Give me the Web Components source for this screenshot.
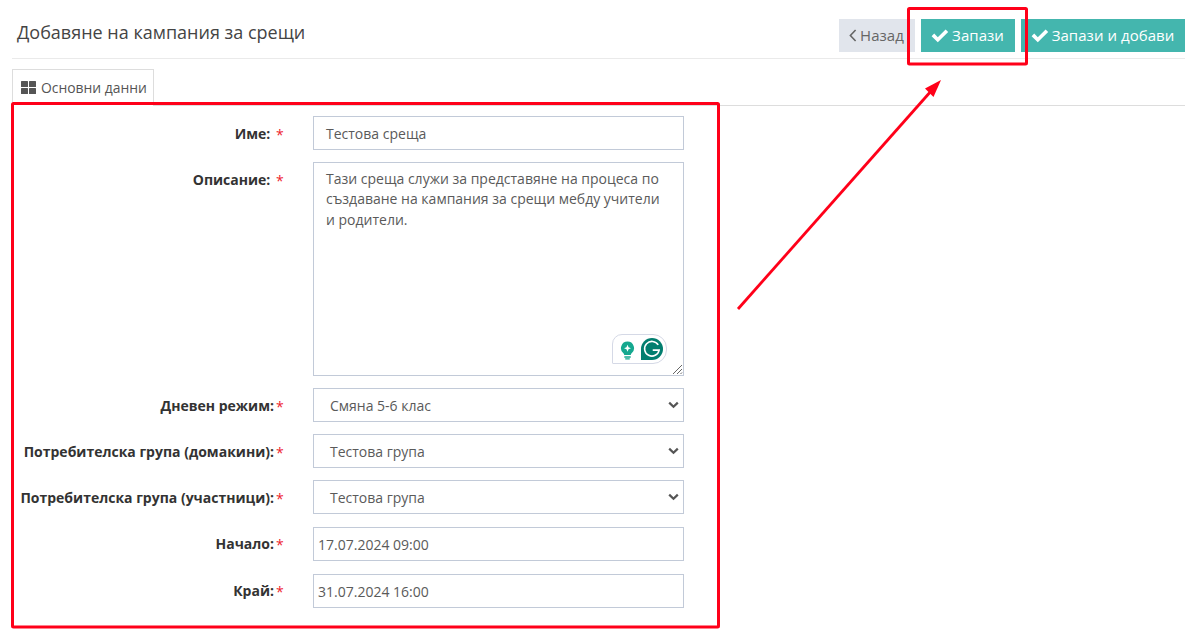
<!DOCTYPE html>
<html lang="bg">
<head>
<meta charset="utf-8">
<title>Добавяне на кампания за срещи</title>
<style>
html, body { margin: 0; padding: 0; background: #fff; }
body { font: 14px "Open Sans", "Noto Sans", sans-serif; color: #555; }
</style>
</head>
<body>
<app-page>
  <page-header slot="header" heading="Добавяне на кампания за срещи">
    <app-button kind="back" icon="back" width="76">Назад</app-button>
    <app-button kind="save" icon="check" width="94">Запази</app-button>
    <app-button kind="save" icon="check" width="164">Запази и добави</app-button>
  </page-header>
  <tab-bar slot="tabs" label="Основни данни"></tab-bar>
  <form-row label="Име: " style="--row-top: 10px">
    <form-field>Тестова среща</form-field>
  </form-row>
  <form-row label="Описание: ">
    <form-field type="area">Тази среща служи за представяне на процеса по създаване на кампания за срещи мебду учители и родители.</form-field>
  </form-row>
  <form-row label="Дневен режим:">
    <form-field type="select">Смяна 5-6 клас</form-field>
  </form-row>
  <form-row label="Потребителска група (домакини):">
    <form-field type="select">Тестова група</form-field>
  </form-row>
  <form-row label="Потребителска група (участници):">
    <form-field type="select">Тестова група</form-field>
  </form-row>
  <form-row label="Начало:" style="--row-top: 13px; --label-top: 7px">
    <form-field type="date">17.07.2024 09:00</form-field>
  </form-row>
  <form-row label="Край:" style="--row-top: 13px; --label-top: 7px">
    <form-field type="date">31.07.2024 16:00</form-field>
  </form-row>
  <red-markup slot="overlay"></red-markup>
</app-page>

<script>
const ICONS = {
  check: `<svg width="18" height="15" viewBox="0 0 18 15"><path d="M.6 8.2 3.2 5.6 6.8 9.2 14.6 1.4 17.2 4 6.8 14.2Z" fill="currentColor"/></svg>`,
  back: `<svg width="8" height="13" viewBox="0 0 8 13"><path d="M6.6 1 1.4 6.5 6.6 12" fill="none" stroke="currentColor" stroke-width="1.6"/></svg>`
};

class AppPage extends HTMLElement {
  constructor () {
    super();
    this.attachShadow({ mode: 'open' }).innerHTML = `
<style>
:host { display: block; position: relative; width: 1199px; height: 641px; overflow: hidden; background: #fff; }
.wrap { width: 1173px; margin-left: 12px; }
</style>
<div class="wrap">
  <slot name="header"></slot>
  <slot name="tabs"></slot>
  <slot></slot>
</div>
<slot name="overlay"></slot>`;
  }
}
customElements.define('app-page', AppPage);

class PageHeader extends HTMLElement {
  constructor () {
    super();
    this.attachShadow({ mode: 'open' }).innerHTML = `
<style>
:host { display: flex; justify-content: space-between; height: 58px; border-bottom: 1px solid #eaeaea; }
h1 { margin: 20px 0 0 5px; font-size: 18px; line-height: 24px; font-weight: 400; color: #444; }
.actions { display: flex; gap: 6px; padding-top: 19px; }
</style>
<h1></h1>
<div class="actions"><slot></slot></div>`;
    this.shadowRoot.querySelector('h1').textContent = this.getAttribute('heading');
  }
}
customElements.define('page-header', PageHeader);

class AppButton extends HTMLElement {
  constructor () {
    super();
    const back = this.getAttribute('kind') === 'back';
    this.attachShadow({ mode: 'open' }).innerHTML = `
<style>
:host { display: flex; align-items: center; justify-content: center; gap: 3px; box-sizing: border-box;
  width: ${this.getAttribute('width')}px; height: 33px; padding: 0 1px 2px 0; font-size: 15px; letter-spacing: .05px;
  background: ${back ? '#e1e5ec' : '#44b6ae'}; color: ${back ? '#666' : '#fff'}; }
svg { display: block; margin-top: 1px; }
</style>
${ICONS[this.getAttribute('icon')]}<span><slot></slot></span>`;
  }
}
customElements.define('app-button', AppButton);

class TabBar extends HTMLElement {
  constructor () {
    super();
    this.attachShadow({ mode: 'open' }).innerHTML = `
<style>
:host { display: block; height: 36px; margin-top: 10px; border-bottom: 1px solid #ddd; }
.tab { display: inline-flex; align-items: center; gap: 5px; box-sizing: border-box; height: 37px; width: 142px; padding-left: 8px;
  padding-bottom: 1px; border: 1px solid #ddd; border-bottom: 0; background: #fff; color: #555; font-size: 13.9px; }
svg { display: block; }
</style>
<div class="tab">
  <svg width="15" height="13" viewBox="0 0 15 13" fill="#555"><rect width="7" height="6" rx=".5"/><rect x="8" width="7" height="6" rx=".5"/><rect y="7" width="7" height="6" rx=".5"/><rect x="8" y="7" width="7" height="6" rx=".5"/></svg>
  <span></span>
</div>`;
    this.shadowRoot.querySelector('span').textContent = this.getAttribute('label');
  }
}
customElements.define('tab-bar', TabBar);

class FormRow extends HTMLElement {
  constructor () {
    super();
    this.attachShadow({ mode: 'open' }).innerHTML = `
<style>
:host { display: grid; grid-template-columns: 273px 1fr; margin-top: var(--row-top, 12px); }
.label { display: flex; justify-content: flex-end; align-items: flex-start; padding-top: var(--label-top, 8px); font-size: 14px; line-height: 20px; font-weight: 700; color: #333; white-space: pre; }
.req { color: #ee1c2e; width: 9px; margin: 1px 0 0 2px; font-size: 14px; font-weight: 400; }
.field { padding-left: 28px; }
</style>
<div class="label"><span class="text"></span></div>
<div class="field"><slot></slot></div>`;
    const text = this.shadowRoot.querySelector('.text');
    text.textContent = this.getAttribute('label');
    const req = document.createElement('span');
    req.className = 'req';
    req.textContent = '*';
    text.after(req);
  }
}
customElements.define('form-row', FormRow);

class FormField extends HTMLElement {
  constructor () {
    super();
    const type = this.getAttribute('type') || 'text';
    const pad = { text: 12, area: 12, select: 16, date: 4 }[type];
    this.attachShadow({ mode: 'open' }).innerHTML = `
<style>
:host { display: block; position: relative; box-sizing: border-box; width: 371px; height: ${type === 'area' ? 214 : 34}px;
  padding: ${type === 'area' ? '6px 18px 0 ' + pad + 'px' : '0 0 0 ' + pad + 'px'};
  border: 1px solid #c2cad8; background: #fff; color: #5a5a5a; font-size: 14px; line-height: ${type === 'area' ? '20.4px' : '33px'}; }
.chev { position: absolute; right: 4px; top: 12px; }
.grip { position: absolute; right: 0; bottom: 0; }
.grammarly { position: absolute; right: 16px; bottom: 11px; display: flex; align-items: center; gap: 6px; box-sizing: border-box;
  width: 55px; height: 30px; padding: 0 0 0 7px; border: 1px solid #d5d9e6; border-radius: 10px 14px 14px 1px; background: #fff; }
.bulb { margin-top: 2px; }
svg { display: block; }
</style>
<slot></slot>
${type === 'select' ? `<svg class="chev" width="11" height="8" viewBox="0 0 11 8"><path d="M1.2 1.6 5.5 5.8 9.8 1.6" fill="none" stroke="#555" stroke-width="2.2"/></svg>` : ''}
${type === 'area' ? `
<div class="grammarly">
  <svg class="bulb" width="15" height="19" viewBox="0 0 16 20"><path d="M8 .5a7 7 0 0 1 4.4 12.4c-.6.5-.9 1.2-.9 1.8h-7c0-.6-.3-1.3-.9-1.8A7 7 0 0 1 8 .5Z" fill="#15a88f"/><path d="M4.6 16h6.8v1.6H4.6zM5.6 18.3h4.8v1.2H5.6z" fill="#15a88f"/><path d="M8 3.8 9.1 6.4 11.7 7.5 9.1 8.6 8 11.2 6.9 8.6 4.3 7.5 6.9 6.4Z" fill="#fff"/></svg>
  <svg width="22" height="22" viewBox="0 0 24 24"><path d="M12 0a12 12 0 0 1 0 24H0V12A12 12 0 0 1 12 0Z" fill="#027e6f"/><path d="M18.8 7.6a8 8 0 1 0 1 5.6h-7" fill="none" stroke="#fff" stroke-width="1.7"/></svg>
</div>
<svg class="grip" width="11" height="11" viewBox="0 0 11 11"><path d="M1 10 10 1M5 10 10 5M8.5 10 10 8.5" stroke="#666" stroke-width="1" fill="none"/></svg>` : ''}`;
  }
}
customElements.define('form-field', FormField);

// Annotation layer drawn on top of the screenshot: frames and arrow.
class RedMarkup extends HTMLElement {
  constructor () {
    super();
    this.attachShadow({ mode: 'open' }).innerHTML = `
<style>
:host { position: absolute; inset: 0; pointer-events: none; display: block; }
svg { position: absolute; left: 0; top: 0; }
</style>
<svg width="1199" height="641" viewBox="0 0 1199 641" fill="none" stroke="#ff0019" stroke-width="3">
  <rect x="12.5" y="103.5" width="706" height="523.5" rx="1"/>
  <rect x="908.5" y="8.5" width="118" height="55.5" rx="1"/>
  <path d="M738 309 932 90" stroke-width="2.8"/>
  <path d="M941 80 933.5 97 925 88.5Z" fill="#ff0019" stroke="none"/>
</svg>`;
  }
}
customElements.define('red-markup', RedMarkup);
</script>
</body>
</html>
